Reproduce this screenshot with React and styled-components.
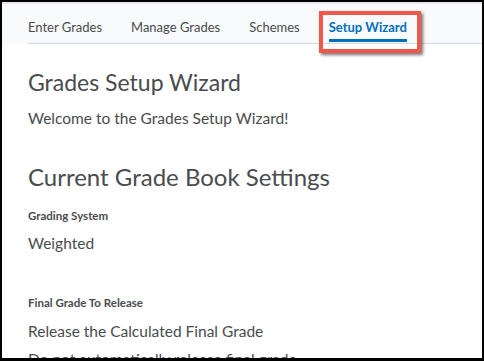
import React from "react";
import styled, { createGlobalStyle } from "styled-components";

const Global = createGlobalStyle`
  html, body { margin: 0; padding: 0; background: #000; }
  body { font-family: Lato, "Open Sans", sans-serif; }
`;

const Frame = styled.div`
  width: 484px;
  height: 361px;
  box-sizing: border-box;
  border-style: solid;
  border-color: #000;
  border-width: 2px 2px 3px 2px;
  background: #fff;
  overflow: hidden;
  display: flex;
  flex-direction: column;
`;

const TabBar = styled.div`
  flex: none;
  background: #f9fafb;
  border-top: 2px solid #e8e9ec;
  padding: 0 0 0 26px;
  height: 42px;
  box-sizing: border-box;
  display: flex;
  align-items: flex-end;
`;

const Tabs = styled.nav`
  flex: 1;
  display: flex;
  gap: 29px;
  border-bottom: 1px solid #d3d9e3;
  height: 40px;
  box-sizing: border-box;
  align-items: stretch;
`;

const Tab = styled.div`
  position: relative;
  display: flex;
  align-items: flex-start;
  padding-top: 15px;
  box-sizing: border-box;
  font-size: 13px;
  font-weight: ${(p) => (p.$active ? 700 : 400)};
  color: ${(p) => (p.$active ? "#006fbf" : "#494c4e")};
  white-space: nowrap;
  &::after {
    content: "";
    display: ${(p) => (p.$active ? "block" : "none")};
    position: absolute;
    left: 0;
    right: 0;
    bottom: 1px;
    height: 3px;
    background: #006fbf;
  }
`;

const Highlight = styled.div`
  position: absolute;
  left: -10px;
  right: -14px;
  top: 7px;
  bottom: -10px;
  border: 4.5px solid #f2574c;
  box-shadow: 2px 2px 3px rgba(0, 0, 0, 0.55);
  pointer-events: none;
`;

const Content = styled.main`
  padding: 24px 0 0 26px;
  color: #494c4e;
`;

const Title = styled.h1`
  margin: 0;
  font-size: ${(p) => p.$size}px;
  font-weight: 400;
  line-height: ${(p) => p.$line}px;
  color: #494c4e;
  margin-top: ${(p) => p.$top || 0}px;
`;

const Para = styled.p`
  margin: 0;
  font-size: 15.5px;
  line-height: 20px;
  margin-top: ${(p) => p.$top || 0}px;
`;

const Label = styled.div`
  font-size: 11.5px;
  font-weight: 700;
  line-height: 14px;
  margin-top: ${(p) => p.$top || 0}px;
`;

export default function App() {
  return (
    <>
      <Global />
      <Frame>
        <TabBar>
          <Tabs>
            <Tab>Enter Grades</Tab>
            <Tab>Manage Grades</Tab>
            <Tab>Schemes</Tab>
            <Tab $active>
              Setup Wizard
              <Highlight />
            </Tab>
          </Tabs>
        </TabBar>
        <Content>
          <Title $size={23} $line={28}>Grades Setup Wizard</Title>
          <Para $top={12}>Welcome to the Grades Setup Wizard!</Para>
          <Title $size={24} $line={30} $top={34}>Current Grade Book Settings</Title>
          <Label $top={17}>Grading System</Label>
          <Para $top={10}>Weighted</Para>
          <Label $top={43}>Final Grade To Release</Label>
          <Para $top={11}>Release the Calculated Final Grade</Para>
          <Para $top={8}>Do not automatically release final grade</Para>
        </Content>
      </Frame>
    </>
  );
}
